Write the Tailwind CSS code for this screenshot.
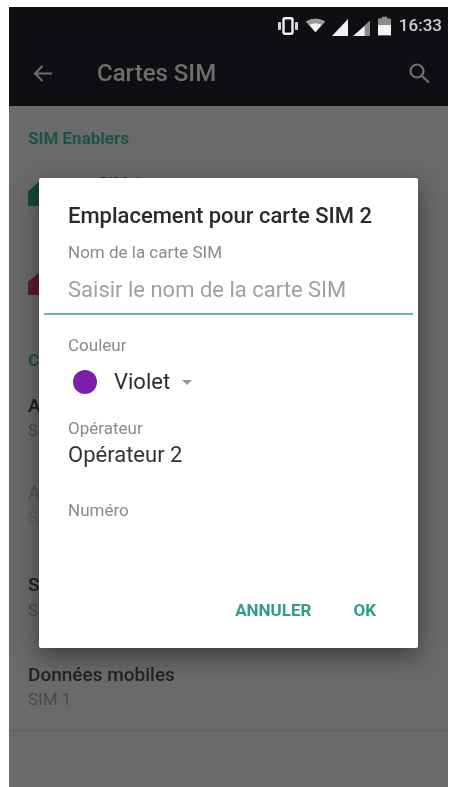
<!DOCTYPE html>
<html lang="fr">
<head>
    <meta charset="UTF-8">
    <meta name="viewport" content="width=device-width, initial-scale=1.0">
    <title>Cartes SIM</title>
    <script src="https://cdn.jsdelivr.net/npm/@tailwindcss/browser@4"></script>
</head>
<body class="bg-white font-['Roboto',sans-serif]">
    <div class="relative ml-[9px] mt-[7px] w-[439px] h-[780px] bg-[#6a6a6a] overflow-hidden blur-[0.6px]">

        <!-- Status bar -->
        <div class="h-[33px] bg-[#0e0f12] flex items-center justify-end pr-[6px] pt-[4px]">
            <svg class="w-[22px] h-[18px] mr-[7px]" viewBox="0 0 22 18" fill="none">
                <rect x="6.5" y="1.2" width="9" height="15.6" rx="1.5" stroke="#f0f0f0" stroke-width="2.4"/>
                <rect x="1" y="5" width="3" height="8" rx="1" fill="#d8d8d8"/>
                <rect x="18" y="5" width="3" height="8" rx="1" fill="#d8d8d8"/>
            </svg>
            <svg class="w-[19px] h-[15px] mr-[7px]" viewBox="0 0 21 15">
                <path d="M0 3 Q10.5 -3 21 3 L10.5 15 Z" fill="#f4f4f4"/>
                <path d="M0 3 Q10.5 -3 21 3 L17.5 7 Q10.5 3 3.5 7 Z" fill="#9a9a9a"/>
            </svg>
            <svg class="w-[16px] h-[17px] mr-[5px] mt-[3px]" viewBox="0 0 16 17"><path d="M0 17 L16 0 V17 Z" fill="#f0f0f0"/></svg>
            <svg class="w-[17px] h-[15px] mr-[8px] mt-[5px]" viewBox="0 0 16 14"><path d="M0 14 L16 0 V14 Z" fill="#eeeeee"/><path d="M11 4.4 L16 0 V14 H11 Z" fill="#8a8a8a"/></svg>
            <svg class="w-[13px] h-[20px] mr-[8px]" viewBox="0 0 14 20">
                <path d="M4 0 H10 V2 H14 V20 H0 V2 H4 Z" fill="#8e8e8e"/>
                <rect x="0" y="9" width="14" height="11" fill="#f4f4f4"/>
            </svg>
            <span class="text-[17px] font-medium leading-none text-[#d0d0d0]">16:33</span>
        </div>

        <!-- Toolbar -->
        <div class="h-[66px] bg-[#0e0f12] flex items-center">
            <svg class="w-[19px] h-[17px] ml-[24px]" viewBox="0 0 19 17" fill="none" stroke="#6f6f6f" stroke-width="2">
                <path d="M19 8.5 H2 M9.5 1 L2 8.5 L9.5 16"/>
            </svg>
            <span class="ml-[45px] text-[24px] font-medium text-[#6e6e6e]">Cartes SIM</span>
            <svg class="w-[23px] h-[20px] ml-auto mr-[17px]" viewBox="0 0 23 20" fill="none" stroke="#6f6f6f" stroke-width="2.2">
                <circle cx="9" cy="8" r="6.5"/>
                <path d="M14 13 L21 19.5"/>
            </svg>
        </div>

        <!-- Settings list behind the dialog -->
        <div class="pl-[19px] pr-[16px] pt-[22px]">
            <p class="text-[17px] font-bold leading-[20px] text-[#1e5148]">SIM Enablers</p>

            <div class="flex items-start h-[125px]">
                <div class="w-[24px] h-[24px] mt-[34px] bg-[#0f4a38] [clip-path:polygon(45%_0,100%_0,100%_100%,0_100%,0_40%)]"></div>
                <span class="ml-[46px] mt-[25px] text-[17px] font-medium leading-[20px] text-[#2a2a2a]">SIM 1</span>
            </div>
            <div class="h-[77px]">
                <div class="w-[24px] h-[22px] bg-[#5c1a2f] [clip-path:polygon(45%_0,100%_0,100%_100%,0_100%,0_40%)]"></div>
            </div>

            <p class="text-[17px] font-bold leading-[20px] text-[#1e5148]">Configuration</p>

            <div class="mt-[26px] h-[87px]">
                <p class="text-[19px] font-medium leading-[20px] text-[#1d1d1d]">Appels</p>
                <p class="text-[17px] leading-[20px] text-[#4a4a4a] mt-[4px]">SIM 1</p>
            </div>
            <div class="h-[92px] opacity-40">
                <p class="text-[19px] leading-[20px] text-[#333]">Appels</p>
                <p class="text-[17px] leading-[20px] text-[#4a4a4a] mt-[4px]">SIM 1</p>
            </div>
            <div class="h-[90px]">
                <p class="text-[19px] font-medium leading-[20px] text-[#1d1d1d]">SMS</p>
                <p class="text-[17px] leading-[20px] text-[#4a4a4a] mt-[5px]">SIM 1</p>
            </div>
            <div>
                <p class="text-[19px] font-medium leading-[20px] text-[#222]">Données mobiles</p>
                <p class="text-[17px] leading-[20px] text-[#4a4a4a] mt-[4px]">SIM 1</p>
            </div>
        </div>
        <div class="mt-[21px] border-t border-[#606060]"></div>

        <!-- Dialog -->
        <div class="absolute left-[30px] top-[171px] w-[379px] h-[470px] bg-white rounded-[2px] shadow-[0_8px_24px_rgba(0,0,0,0.45)] flex flex-col">
            <div class="pl-[29px] pt-[25px]">
                <h2 class="text-[22px] font-medium leading-[26px] text-[#2a2a2a]">Emplacement pour carte SIM 2</h2>
                <p class="mt-[13px] text-[17px] leading-[20px] text-[#8a8a8a]">Nom de la carte SIM</p>
                <p class="mt-[14px] text-[22px] leading-[28px] text-[#a0a0a0]">Saisir le nom de la carte SIM</p>
            </div>
            <div class="mx-[5px] mt-[9px] h-[2px] bg-[#69b8ab]"></div>
            <div class="pl-[29px] pt-[20px]">
                <p class="text-[17px] leading-[20px] text-[#8a8a8a]">Couleur</p>
                <div class="flex items-center mt-[12px] h-[30px]">
                    <span class="ml-[5px] w-[24px] h-[24px] rounded-full bg-[#7b1fa8]"></span>
                    <span class="ml-[17px] text-[22px] leading-none text-[#2d2d2d]">Violet</span>
                    <span class="ml-[12px] mt-[1px] w-0 h-0 border-x-[5px] border-x-transparent border-t-[5px] border-t-[#999]"></span>
                </div>
                <p class="mt-[21px] text-[17px] leading-[20px] text-[#8a8a8a]">Opérateur</p>
                <p class="mt-[4px] text-[22px] leading-[26px] text-[#333]">Opérateur 2</p>
                <p class="mt-[32px] text-[17px] leading-[20px] text-[#8a8a8a]">Numéro</p>
            </div>
            <div class="mt-auto flex justify-end items-center gap-[42px] pr-[42px] pb-[28px]">
                <span class="text-[17px] font-bold leading-[20px] text-[#2f9d8d]">ANNULER</span>
                <span class="text-[17px] font-bold leading-[20px] text-[#2f9d8d]">OK</span>
            </div>
        </div>
    </div>
</body>
</html>
